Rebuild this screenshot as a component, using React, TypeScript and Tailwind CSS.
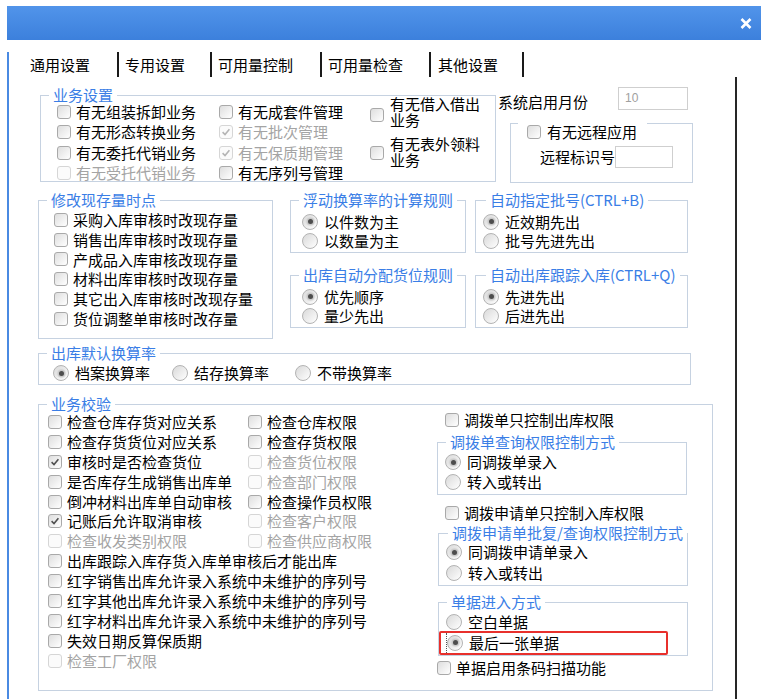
import React from "react";

function CheckBox({ checked, disabled }: { checked?: boolean; disabled?: boolean }) {
  return (
    <span
      className={
        disabled
          ? "flex h-[14px] w-[14px] shrink-0 items-center justify-center rounded-[3px] border border-[#d6d6d6] bg-[#fbfbfb]"
          : "flex h-[14px] w-[14px] shrink-0 items-center justify-center rounded-[3px] border border-[#a9a9a9] bg-linear-to-br from-[#dedede] to-[#ffffff]"
      }
    >
      {checked && (
        <svg width="10" height="10" viewBox="0 0 10 10">
          <path
            d="M1.6 5.2 L4 7.5 L8.4 2.3"
            fill="none"
            stroke={disabled ? "#b4b4b4" : "#4f4f4f"}
            strokeWidth="1.6"
          />
        </svg>
      )}
    </span>
  );
}

function Radio({ checked }: { checked?: boolean }) {
  return (
    <span className="flex h-[16px] w-[16px] shrink-0 items-center justify-center rounded-full border border-[#b3b3b3] bg-linear-to-br from-[#d9d9d9] to-[#ffffff]">
      {checked && <span className="h-[5px] w-[5px] rounded-full bg-[#4d4d4d] shadow-[0_0_1.5px_1.5px_#c4c4c4]" />}
    </span>
  );
}

function Chk({
  label,
  checked,
  disabled,
  className = "",
}: {
  label: React.ReactNode;
  checked?: boolean;
  disabled?: boolean;
  className?: string;
}) {
  return (
    <div className={`flex items-center gap-[5px] whitespace-nowrap ${className}`}>
      <CheckBox checked={checked} disabled={disabled} />
      <span className={disabled ? "text-[#a4a4a4]" : "text-black"}>{label}</span>
    </div>
  );
}

function Rad({ label, checked, className = "" }: { label: string; checked?: boolean; className?: string }) {
  return (
    <div className={`flex items-center gap-[6px] whitespace-nowrap ${className}`}>
      <Radio checked={checked} />
      <span>{label}</span>
    </div>
  );
}

function Legend({ children, className = "" }: { children: React.ReactNode; className?: string }) {
  return (
    <legend className={`ml-[8px] px-[4px] leading-[16px] whitespace-nowrap text-[#3a7ee6] ${className}`}>{children}</legend>
  );
}

export default function App() {
  return (
    <div className="h-[699px] w-[761px] overflow-hidden bg-white text-[15px] leading-[20px] text-black font-['Noto_Sans_CJK_SC',sans-serif]">
      <div className="pl-[7px] pt-[6px]">
        <div className="w-[754px]">
          {/* title bar */}
          <div className="flex h-[34px] items-center justify-end bg-linear-to-b from-[#5194ea] to-[#3c80dc] pr-[9px]">
            <svg width="12" height="11" viewBox="0 0 12 11">
              <path d="M1.5 1 L10.5 10 M10.5 1 L1.5 10" stroke="#ffffff" strokeWidth="2.6" />
            </svg>
          </div>
          <div className="h-[659px] border-l-2 border-[#4a8ae2]">
            {/* tabs */}
            <div className="mt-[12px] flex h-[25px] items-center pl-[21px]">
              <span>通用设置</span>
              <span className="ml-[27px] h-[25px] w-[2px] bg-[#1a1a1a]" />
              <span className="ml-[6px]">专用设置</span>
              <span className="ml-[25px] h-[25px] w-[2px] bg-[#1a1a1a]" />
              <span className="ml-[6px]">可用量控制</span>
              <span className="ml-[27px] h-[25px] w-[2px] bg-[#1a1a1a]" />
              <span className="ml-[6px]">可用量检查</span>
              <span className="ml-[26px] h-[25px] w-[2px] bg-[#1a1a1a]" />
              <span className="ml-[7px]">其他设置</span>
              <span className="ml-[24px] h-[25px] w-[2px] bg-[#1a1a1a]" />
            </div>

            {/* panel */}
            <div className="h-[622px] w-[728px] border-r-2 border-[#262626] pl-[29px] pt-[10px]">
              {/* Row A */}
              <div className="flex h-[96px] items-start">
                <fieldset className="ml-[2px] h-[95px] w-[456px] shrink-0 border border-[#c6d2e1]">
                  <Legend>业务设置</Legend>
                  <div className="-mt-[1px] flex pl-[16px]">
                    <div className="flex w-[162px] flex-col">
                      <Chk className="h-[20.3px]" label="有无组装拆卸业务" />
                      <Chk className="h-[20.3px]" label="有无形态转换业务" />
                      <Chk className="h-[20.3px]" label="有无委托代销业务" />
                      <Chk className="h-[20.3px]" label="有无受托代销业务" disabled />
                    </div>
                    <div className="flex w-[151px] flex-col">
                      <Chk className="h-[20.3px]" label="有无成套件管理" />
                      <Chk className="h-[20.3px]" label="有无批次管理" checked disabled />
                      <Chk className="h-[20.3px]" label="有无保质期管理" checked disabled />
                      <Chk className="h-[20.3px]" label="有无序列号管理" />
                    </div>
                    <div className="-mt-[6px] flex flex-col gap-[8px]">
                      <div className="flex items-center gap-[6px]">
                        <span className="mt-[5px]">
                          <CheckBox />
                        </span>
                        <span className="leading-[16px]">
                          有无借入借出
                          <br />
                          业务
                        </span>
                      </div>
                      <div className="flex items-center gap-[6px]">
                        <span className="mt-[2px]">
                          <CheckBox />
                        </span>
                        <span className="leading-[16px]">
                          有无表外领料
                          <br />
                          业务
                        </span>
                      </div>
                    </div>
                  </div>
                </fieldset>
                <div className="ml-[2px] flex flex-col">
                  <div className="flex items-start">
                    <span className="mt-[7px] leading-[16px]">系统启用月份</span>
                    <div className="ml-[30px] h-[23px] w-[70px] border border-[#cfcfcf] pl-[6px] font-['Liberation_Sans',sans-serif] text-[12px] leading-[20px] text-[#a0a0a0]">
                      10
                    </div>
                  </div>
                  <div className="ml-[12px] mt-[13px] h-[60px] w-[183px] border border-[#c6d2e1]">
                    <div className="-mt-[1px] ml-[7px] flex h-[17px] w-fit items-center gap-[6px] bg-white pl-[9px] pr-[10px]">
                      <CheckBox />
                      <span className="leading-[17px]">有无远程应用</span>
                    </div>
                    <div className="ml-[29px] mt-[6px] flex items-center">
                      <span>远程标识号</span>
                      <div className="h-[22px] w-[58px] border border-[#cfcfcf]" />
                    </div>
                  </div>
                </div>
              </div>

              {/* Row B */}
              <div className="mt-[9px] flex h-[147px] items-start">
                <fieldset className="h-[147px] w-[235px] shrink-0 border border-[#c6d2e1]">
                  <Legend>修改现存量时点</Legend>
                  <div className="mt-[2px] flex flex-col pl-[15px]">
                    <Chk className="h-[19.8px]" label="采购入库审核时改现存量" />
                    <Chk className="h-[19.8px]" label="销售出库审核时改现存量" />
                    <Chk className="h-[19.8px]" label="产成品入库审核改现存量" />
                    <Chk className="h-[19.8px]" label="材料出库审核时改现存量" />
                    <Chk className="h-[19.8px]" label="其它出入库审核时改现存量" />
                    <Chk className="h-[19.8px]" label="货位调整单审核时改存量" />
                  </div>
                </fieldset>
                <div className="ml-[17px] flex w-[176px] shrink-0 flex-col">
                  <fieldset className="h-[61px] w-[176px] border border-[#c6d2e1]">
                    <Legend>浮动换算率的计算规则</Legend>
                    <div className="mt-[4px] flex flex-col pl-[11px]">
                      <Rad className="h-[19px]" label="以件数为主" checked />
                      <Rad className="h-[19px]" label="以数量为主" />
                    </div>
                  </fieldset>
                  <fieldset className="mt-[14px] h-[61px] w-[176px] border border-[#c6d2e1]">
                    <Legend>出库自动分配货位规则</Legend>
                    <div className="mt-[4px] flex flex-col pl-[11px]">
                      <Rad className="h-[19px]" label="优先顺序" checked />
                      <Rad className="h-[19px]" label="量少先出" />
                    </div>
                  </fieldset>
                </div>
                <div className="ml-[9px] flex w-[213px] shrink-0 flex-col">
                  <fieldset className="h-[61px] w-[213px] border border-[#c6d2e1]">
                    <Legend className="ml-[10px]">自动指定批号(CTRL+B)</Legend>
                    <div className="mt-[4px] flex flex-col pl-[7px]">
                      <Rad className="h-[19px]" label="近效期先出" checked />
                      <Rad className="h-[19px]" label="批号先进先出" />
                    </div>
                  </fieldset>
                  <fieldset className="mt-[14px] h-[61px] w-[213px] border border-[#c6d2e1]">
                    <Legend className="ml-[10px]">自动出库跟踪入库(CTRL+Q)</Legend>
                    <div className="mt-[4px] flex flex-col pl-[7px]">
                      <Rad className="h-[19px]" label="先进先出" checked />
                      <Rad className="h-[19px]" label="后进先出" />
                    </div>
                  </fieldset>
                </div>
              </div>

              {/* Row C */}
              <fieldset className="mt-[6px] h-[40px] w-[653px] border border-[#c6d2e1]">
                <Legend>出库默认换算率</Legend>
                <div className="mt-[2px] flex h-[20px] items-center pl-[14px]">
                  <Rad className="w-[119px]" label="档案换算率" checked />
                  <Rad className="w-[123px]" label="结存换算率" />
                  <Rad label="不带换算率" />
                </div>
              </fieldset>

              {/* Row D */}
              <fieldset className="mt-[11px] h-[295px] w-[675px] border border-[#c6d2e1]">
                <Legend>业务校验</Legend>
                <div className="flex">
                  <div className="flex w-[398px] shrink-0 flex-col pl-[9px]">
                    <div className="flex h-[19.9px]">
                      <Chk className="w-[200px]" label="检查仓库存货对应关系" />
                      <Chk label="检查仓库权限" />
                    </div>
                    <div className="flex h-[19.9px]">
                      <Chk className="w-[200px]" label="检查存货货位对应关系" />
                      <Chk label="检查存货权限" />
                    </div>
                    <div className="flex h-[19.9px]">
                      <Chk className="w-[200px]" label="审核时是否检查货位" checked />
                      <Chk label="检查货位权限" disabled />
                    </div>
                    <div className="flex h-[19.9px]">
                      <Chk className="w-[200px]" label="是否库存生成销售出库单" />
                      <Chk label="检查部门权限" disabled />
                    </div>
                    <div className="flex h-[19.9px]">
                      <Chk className="w-[200px]" label="倒冲材料出库单自动审核" />
                      <Chk label="检查操作员权限" />
                    </div>
                    <div className="flex h-[19.9px]">
                      <Chk className="w-[200px]" label="记账后允许取消审核" checked />
                      <Chk label="检查客户权限" disabled />
                    </div>
                    <div className="flex h-[19.9px]">
                      <Chk className="w-[200px]" label="检查收发类别权限" disabled />
                      <Chk label="检查供应商权限" disabled />
                    </div>
                    <Chk className="h-[19.9px]" label="出库跟踪入库存货入库单审核后才能出库" />
                    <Chk className="h-[19.9px]" label="红字销售出库允许录入系统中未维护的序列号" />
                    <Chk className="h-[19.9px]" label="红字其他出库允许录入系统中未维护的序列号" />
                    <Chk className="h-[19.9px]" label="红字材料出库允许录入系统中未维护的序列号" />
                    <Chk className="h-[19.9px]" label="失效日期反算保质期" />
                    <Chk className="h-[19.9px]" label="检查工厂权限" disabled />
                  </div>
                  <div className="flex w-[251px] shrink-0 flex-col">
                    <Chk className="-mt-[2px] ml-[8px] h-[20px]" label="调拨单只控制出库权限" />
                    <fieldset className="mt-[4px] h-[61px] w-[250px] border border-[#c6d2e1]">
                      <Legend>调拨单查询权限控制方式</Legend>
                      <div className="mt-[2px] flex flex-col pl-[7px]">
                        <Rad className="h-[20px]" label="同调拨单录入" checked />
                        <Rad className="h-[20px]" label="转入或转出" />
                      </div>
                    </fieldset>
                    <Chk className="ml-[8px] mt-[8px] h-[20px]" label="调拨申请单只控制入库权限" />
                    <fieldset className="ml-[1px] mt-[2px] h-[61px] w-[250px] border border-[#c6d2e1]">
                      <Legend className="ml-[9px] px-[3px]">调拨申请单批复/查询权限控制方式</Legend>
                      <div className="mt-[1px] flex flex-col pl-[7px]">
                        <Rad className="h-[20.5px]" label="同调拨申请单录入" checked />
                        <Rad className="h-[20.5px]" label="转入或转出" />
                      </div>
                    </fieldset>
                    <fieldset className="ml-[1px] mt-[8px] h-[62px] w-[250px] border border-[#c6d2e1]">
                      <Legend>单据进入方式</Legend>
                      <div className="mt-[2px] flex flex-col">
                        <Rad className="h-[20.5px] pl-[7px]" label="空白单据" />
                        <div className="relative h-[20.5px] pl-[7px]">
                          <div className="flex h-[20.5px] items-center gap-[6px] border-l border-dotted border-[#555555] pl-[0px]">
                            <Radio checked />
                            <span>最后一张单据</span>
                          </div>
                          <div className="absolute left-0 top-[-1.5px] h-[24px] w-[229px] rounded-[2px] border-2 border-[#e8302c]" />
                        </div>
                      </div>
                    </fieldset>
                    <Chk className="mt-[2px] h-[20px]" label="单据启用条码扫描功能" />
                  </div>
                </div>
              </fieldset>
            </div>
          </div>
        </div>
      </div>
    </div>
  );
}
